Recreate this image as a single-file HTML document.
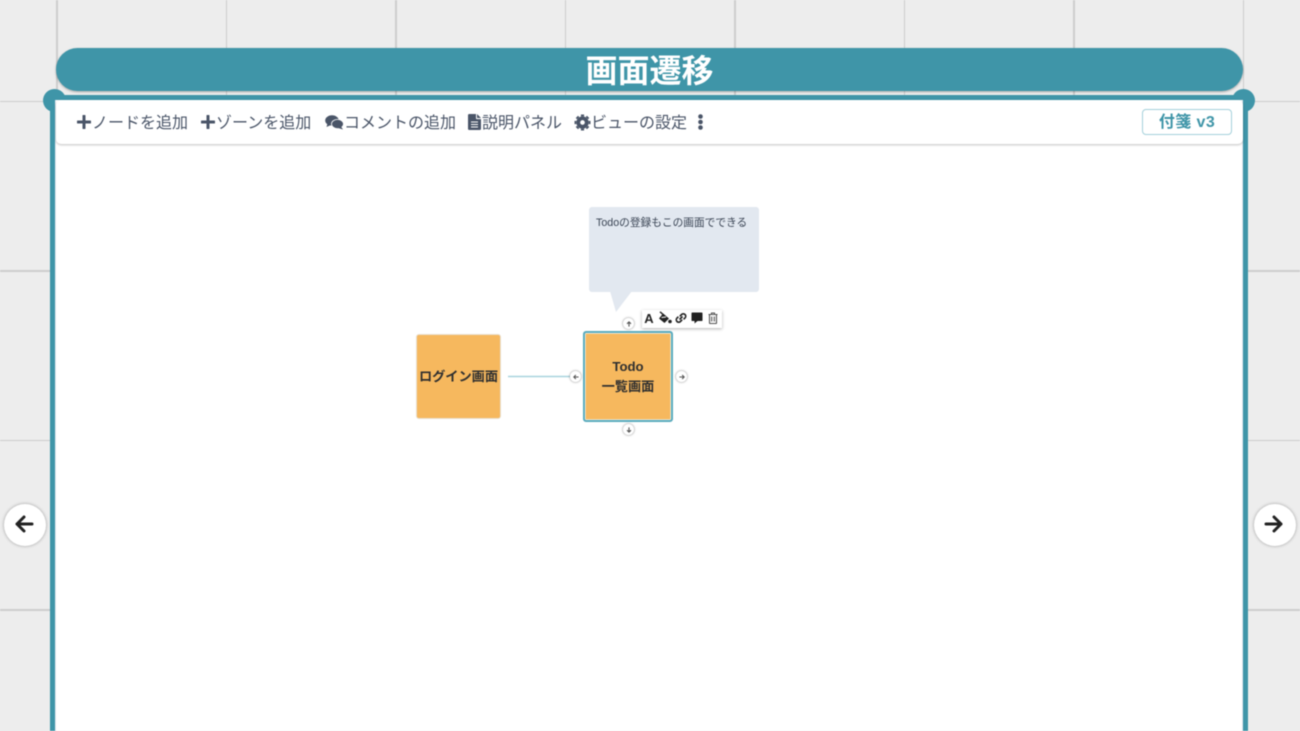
<!DOCTYPE html>
<html lang="ja"><head><meta charset="utf-8"><title>画面遷移</title>
<style>
*{box-sizing:border-box}
html,body{margin:0;padding:0;width:1300px;height:731px;overflow:hidden}
body{background:#ededed;font-family:"Liberation Sans","Noto Sans CJK JP",sans-serif}
#w{position:absolute;left:0;top:0;width:1300px;height:731px;overflow:hidden;background:#ededed;filter:blur(.45px)}
.abs{position:absolute}
.vl{position:absolute;top:0;width:1.500px;height:731px;background:#cdcdcd}
.hl{position:absolute;left:0;width:1300px;height:1.500px;background:#cdcdcd}
.t{position:absolute;white-space:nowrap;color:#4a5568;font-size:16px;line-height:22px;top:113px}
.i{position:absolute}
.h{position:absolute;width:11px;height:11px;border-radius:50%;background:#fff;box-shadow:0 0 2px rgba(0,0,0,.5)}
.h svg{position:absolute;left:2.500px;top:2.500px;width:6px;height:6px}
.nt{position:absolute;font-weight:700;color:#2f2f2f;text-align:center;white-space:nowrap}
</style></head><body><div id="w">
<div class="vl" style="left:56px"></div><div class="vl" style="left:225.500px"></div><div class="vl" style="left:395px"></div><div class="vl" style="left:564.500px"></div><div class="vl" style="left:734px"></div><div class="vl" style="left:903.500px"></div><div class="vl" style="left:1073px"></div><div class="vl" style="left:1242.500px"></div>
<div class="hl" style="top:100.500px"></div><div class="hl" style="top:270px"></div><div class="hl" style="top:439.500px"></div><div class="hl" style="top:609px"></div>

<div class="abs" style="left:56px;top:48px;width:1187px;height:43px;border-radius:22px;background:#3f95a8;box-shadow:0 1px 2px rgba(0,0,0,.3);color:#fff;font-size:32px;font-weight:700;text-align:center;line-height:46px">画面遷移</div>

<div class="abs" style="left:50px;top:95px;width:1198px;height:640px;background:#3f95a8"></div>
<div class="abs" style="left:43px;top:89px;width:23px;height:23px;border-radius:50%;background:#3f95a8"></div>
<div class="abs" style="left:1232px;top:89px;width:23px;height:23px;border-radius:50%;background:#3f95a8"></div>
<div class="abs" style="left:55px;top:100px;width:1188px;height:635px;background:#fff;border-left:1px solid #e2e8f0;border-right:1px solid #e2e8f0"></div>

<div class="abs" style="left:56px;top:100px;width:1187px;height:44px;background:#fff;border-radius:5px;box-shadow:0 1px 2px rgba(0,0,0,.25)"></div>

<svg class="i" style="left:77px;top:115px" width="14" height="14" viewBox="0 0 14 14"><path d="M7 1v12M1 7h12" stroke="#4a5568" stroke-width="3" stroke-linecap="round"/></svg>
<div class="t" style="left:92px">ノードを追加</div>
<svg class="i" style="left:201px;top:115px" width="14" height="14" viewBox="0 0 14 14"><path d="M7 1v12M1 7h12" stroke="#4a5568" stroke-width="3" stroke-linecap="round"/></svg>
<div class="t" style="left:216px">ゾーンを追加</div>
<svg class="i" style="left:325px;top:115px" width="19" height="15" viewBox="0 0 19 15"><ellipse cx="7" cy="5.500" rx="6.800" ry="5.200" fill="#4a5568"/><path d="M2.500 8.500 1.500 12 6 10z" fill="#4a5568"/><ellipse cx="12.500" cy="9" rx="6" ry="4.600" fill="#4a5568" stroke="#fff" stroke-width=".8"/><path d="M16 11.500 18 14.500 13 13z" fill="#4a5568"/></svg>
<div class="t" style="left:344px">コメントの追加</div>
<svg class="i" style="left:468px;top:114px" width="13" height="16" viewBox="0 0 13 16"><path d="M0 1.200C0 .5.5 0 1.200 0H8v4.200c0 .5.4.9.9.9H13v9.700c0 .7-.5 1.200-1.200 1.200H1.200C.5 16 0 15.500 0 14.800z" fill="#4a5568"/><path d="M9 0l4 4H9z" fill="#4a5568"/><path d="M3 8h7M3 10.500h7M3 13h7" stroke="#fff" stroke-width=".9"/></svg>
<div class="t" style="left:482px">説明パネル</div>
<svg class="i" style="left:574px;top:114px" width="17" height="17" viewBox="0 0 16 16"><path d="M8 2.200v-1.700M8 15.500v-1.700M2.200 8H.5M15.500 8h-1.700M3.900 3.900 2.700 2.700M13.300 13.300l-1.200-1.200M3.900 12.100l-1.200 1.200M13.300 2.700l-1.200 1.200" stroke="#4a5568" stroke-width="3"/><circle cx="8" cy="8" r="4" fill="none" stroke="#4a5568" stroke-width="3.600"/></svg>
<div class="t" style="left:591px">ビューの設定</div>
<svg class="i" style="left:697px;top:114px" width="7" height="16" viewBox="0 0 7 16"><circle cx="3.500" cy="2.500" r="2.300" fill="#4a5568"/><circle cx="3.500" cy="8" r="2.300" fill="#4a5568"/><circle cx="3.500" cy="13.500" r="2.300" fill="#4a5568"/></svg>

<div class="abs" style="left:1142px;top:109px;width:90px;height:26px;border:1.500px solid #a4d0db;border-radius:4px;color:#3f95a8;font-size:16px;font-weight:700;text-align:center;line-height:26px;letter-spacing:.4px">付箋 v3</div>

<div class="abs" style="left:589px;top:207px;width:169.500px;height:85px;background:#e2e8f0;border-radius:3px"></div>
<svg class="i" style="left:610px;top:291px" width="22" height="22" viewBox="0 0 22 22"><path d="M0 0H22L6 21z" fill="#e2e8f0"/></svg>
<div class="abs" style="left:596px;top:214px;font-size:10.700px;line-height:18px;color:#3a4454;white-space:nowrap">Todoの登録もこの画面でできる</div>

<svg class="i" style="left:0;top:0" width="1300" height="731" viewBox="0 0 1300 731"><path d="M508 376.500H570" stroke="#a8d3de" stroke-width="1.400" fill="none"/></svg>

<div class="abs" style="left:416px;top:334px;width:85px;height:85px;background:#f6b85e;border:1px solid #e8dfcf;border-radius:3px"></div>
<div class="nt" style="left:416px;top:367px;width:85px;font-size:13.200px;line-height:20px">ログイン画面</div>

<div class="abs" style="left:583px;top:331px;width:90px;height:91px;background:#f6b85e;border:2px solid #58aabd;border-radius:3px;box-shadow:inset 0 0 0 .6px #fff"></div>
<div class="nt" style="left:583px;top:357px;width:90px;font-size:13.200px;line-height:20px">Todo<br>一覧画面</div>

<div class="h" style="left:623px;top:318px"><svg viewBox="0 0 7 7"><path d="M3.500 6.500V1M1.200 3.300 3.500 1l2.300 2.300" stroke="#555" stroke-width="1.300" fill="none"/></svg></div>
<div class="h" style="left:623px;top:424px"><svg viewBox="0 0 7 7"><path d="M3.500 .5V6M1.200 3.700 3.500 6l2.300-2.300" stroke="#555" stroke-width="1.300" fill="none"/></svg></div>
<div class="h" style="left:570px;top:371px"><svg viewBox="0 0 7 7"><path d="M6.500 3.500H1M3.300 1.200 1 3.500l2.300 2.300" stroke="#555" stroke-width="1.300" fill="none"/></svg></div>
<div class="h" style="left:676px;top:371px"><svg viewBox="0 0 7 7"><path d="M.5 3.500H6M3.700 1.200 6 3.500 3.700 5.800" stroke="#555" stroke-width="1.300" fill="none"/></svg></div>

<div class="abs" style="left:642px;top:310px;width:80px;height:18px;background:#fff;box-shadow:0 1px 3px rgba(0,0,0,.3)"></div>
<div class="abs" style="left:644px;top:311px;width:10px;font-size:13px;line-height:15px;font-weight:700;color:#222;text-align:center">A</div>
<svg class="i" style="left:658px;top:311px" width="14" height="13" viewBox="0 0 14 13"><path d="M5 2.500 11 7.500 6.500 12 1 7.500z" fill="#222"/><path d="M2 .8 7.500 5.500" stroke="#222" stroke-width="1.400"/><circle cx="12" cy="10.500" r="1.800" fill="#222"/><path d="M3.500 6.500 8 6" stroke="#fff" stroke-width="1"/></svg>
<svg class="i" style="left:675px;top:312px" width="12" height="12" viewBox="0 0 12 12"><path d="M4.500 7.500 7.500 4.500M4.800 4.300 6.600 2.500A2.400 2.400 0 0 1 10 5.900L8.600 7.300M7.200 7.700 5.400 9.500A2.400 2.400 0 0 1 2 6.100L3.400 4.700" stroke="#222" stroke-width="1.600" fill="none"/></svg>
<svg class="i" style="left:691px;top:312px" width="12" height="12" viewBox="0 0 12 12"><path d="M1.300.5h9.400c.5 0 .8.400.8.800v6.900c0 .5-.4.800-.8.800H6.500L3.500 11.500V9H1.300C.8 9 .5 8.700.5 8.200V1.300C.5.900.8.500 1.300.5z" fill="#222"/></svg>
<svg class="i" style="left:708px;top:312px" width="10" height="12" viewBox="0 0 10 12"><path d="M.5 2.500h9M3.500 2.500V1h3v1.500M1.500 2.500V11c0 .3.200.5.500.5h6c.3 0 .5-.2.500-.5V2.500M3.700 4.500v5M6.300 4.500v5" stroke="#555" stroke-width="1.100" fill="none"/></svg>

<div class="abs" style="left:3.500px;top:503.500px;width:42px;height:42px;border-radius:50%;background:#fff;box-shadow:0 0 3px rgba(0,0,0,.35)"></div>
<svg class="i" style="left:14px;top:514px" width="20" height="20" viewBox="0 0 20 20"><path d="M18 10H3M10 3 3 10l7 7" stroke="#222" stroke-width="3" fill="none" stroke-linecap="round" stroke-linejoin="round"/></svg>
<div class="abs" style="left:1253.500px;top:503.500px;width:42px;height:42px;border-radius:50%;background:#fff;box-shadow:0 0 3px rgba(0,0,0,.35)"></div>
<svg class="i" style="left:1264px;top:514px" width="20" height="20" viewBox="0 0 20 20"><path d="M2 10H17M10 3l7 7-7 7" stroke="#222" stroke-width="3" fill="none" stroke-linecap="round" stroke-linejoin="round"/></svg>
</div></body></html>
